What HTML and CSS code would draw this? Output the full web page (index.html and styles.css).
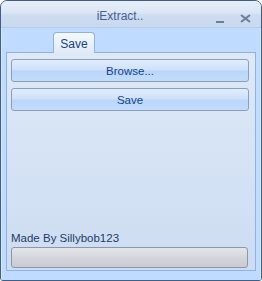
FILE: index.html
```html
<!DOCTYPE html>
<html>
<head>
<meta charset="utf-8">
<link rel="stylesheet" href="styles.css">
</head>
<body>
<div class="window">
  <div class="titlebar">
    <span class="title">iExtract..</span>
    <span class="ctrl min"></span>
    <span class="ctrl close">
      <svg width="11" height="9" viewBox="0 0 11 9"><path d="M1 1 L10 8 M10 1 L1 8" stroke="#6d7f96" stroke-width="2" fill="none"/></svg>
    </span>
  </div>
  <div class="body">
    <div class="tabstrip">
      <div class="tab">Save</div>
    </div>
    <div class="panel">
      <button class="btn">Browse...</button>
      <button class="btn">Save</button>
      <div class="spacer"></div>
      <div class="label">Made By Sillybob123</div>
      <div class="progress"></div>
    </div>
  </div>
</div>
</body>
</html>
```

FILE: styles.css
```css
html, body { margin: 0; padding: 0; background: #ffffff; }
body { font-family: "Liberation Sans", Arial, sans-serif; font-size: 11px; }
.window {
  box-sizing: border-box;
  width: 262px; height: 281px;
  border: 1px solid #3f5f8a;
  border-radius: 7px 7px 3px 3px;
  background: #c5dbf7;
  display: flex; flex-direction: column;
  overflow: hidden;
}
.titlebar {
  height: 27px; flex: none;
  background: linear-gradient(#e6eef9 0%, #dbe6f5 45%, #cddcf0 55%, #c9d9ef 100%);
  display: flex; align-items: center;
  position: relative;
  border-bottom: 1px solid #b6cbe6;
  box-sizing: border-box;
}
.title {
  position: absolute; left: 0; right: 22px; top: 8px;
  text-align: center; color: #44618f; font-size: 12px;
}
.ctrl { position: absolute; }
.min { left: 215px; top: 20px; width: 8px; height: 2px; background: #6d7f96; }
.close { left: 239px; top: 12px; }
.body {
  flex: 1; display: flex; flex-direction: column;
  padding: 0 4px 9px 4px;
  background: #bfdbff;
  border-left: 1px solid #d9e7fa;
  border-right: 1px solid #d9e7fa;
}
.tabstrip { height: 24px; flex: none; display: flex; align-items: flex-end; padding-left: 47px; }
.tab {
  box-sizing: border-box;
  width: 42px; height: 21px;
  margin-bottom: -1px;
  border: 1px solid #8db2e3; border-bottom: none;
  border-radius: 4px 4px 0 0;
  background: linear-gradient(#f5f9fe, #e0eaf6);
  color: #15428b; font-size: 12px;
  text-align: center; padding-top: 4px;
  position: relative; z-index: 1;
}
.panel {
  flex: 1;
  border: 1px solid #8db2e3;
  background: linear-gradient(#dfe9f6 0%, #d6e4f5 40%, #cddcf1 100%);
  display: flex; flex-direction: column;
  padding: 6px 7px 2px 4px;
  box-sizing: border-box;
}
.btn {
  box-sizing: border-box;
  height: 23px; width: 238px;
  margin: 0 0 6px 0;
  border: 1px solid #8b9fbd;
  border-radius: 3px;
  background: linear-gradient(#e1edfc 0%, #cfe2fa 45%, #b9d6fa 55%, #c3dcfb 100%);
  color: #15428b;
  font-family: "Liberation Sans", Arial, sans-serif; font-size: 11.5px;
  padding: 0;
}
.spacer { flex: 1; }
.label { color: #1e3b66; font-size: 11.5px; line-height: 14px; margin-bottom: 2px; }
.progress {
  box-sizing: border-box;
  height: 21px; width: 237px;
  border: 1px solid #8b98ab;
  border-radius: 3px;
  background: linear-gradient(#e5e6e9, #d0d3d9 60%, #c9ccd3);
}
```
